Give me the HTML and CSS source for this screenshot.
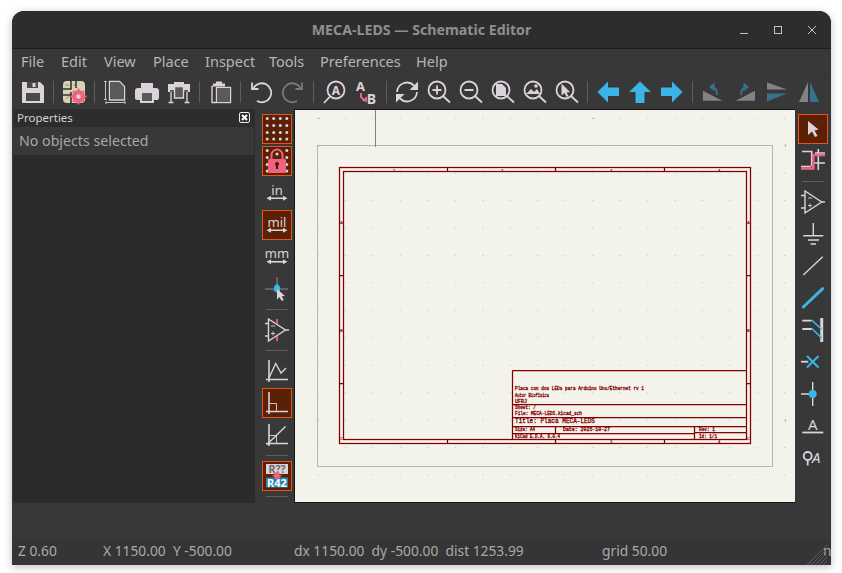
FILE: index.html
```html
<!DOCTYPE html>
<html lang="en">
<head>
<meta charset="utf-8">
<title>MECA-LEDS — Schematic Editor</title>
<link rel="stylesheet" href="styles.css">
</head>
<body>
<div class="window">
  <header class="titlebar">
    <span></span>
    <h1 class="title">MECA-LEDS — Schematic Editor</h1>
    <div class="winctl">
      <svg class="i16" viewBox="0 0 16 16"><path class="wc" d="M4 11.500h8"/></svg>
      <svg class="i16" viewBox="0 0 16 16"><rect class="wc" x="4.500" y="4.500" width="7" height="7"/></svg>
      <svg class="i16" viewBox="0 0 16 16"><path class="wc" d="M4 4l8 8M12 4l-8 8"/></svg>
    </div>
  </header>
  <nav class="menubar">
    <span>File</span><span>Edit</span><span>View</span><span>Place</span><span>Inspect</span><span>Tools</span><span>Preferences</span><span>Help</span>
  </nav>
  <div class="toolbar">
    <div class="tb"><svg class="ic" viewBox="0 0 24 24"><path class="f" d="M1 2h18l4 4v17H1z"/><rect class="dk" x="5" y="13" width="14" height="8"/><rect class="dk" x="6" y="2" width="11" height="6"/><rect class="f" x="11.500" y="3" width="3" height="4"/></svg></div>
    <i class="sep"></i>
    <div class="tb"><svg class="ic" viewBox="0 0 24 24"><rect x="1" y="1" width="22" height="22" rx="4" class="beige"/><path class="dline" d="M9 1v8H1M14 1v7M1 15h8v8M9 12v6"/><path class="dthin" d="M3 5h4M11 4l3 3M4 19l3-3"/><circle cx="16.500" cy="16.500" r="6.500" class="pf"/><path class="pst" d="M16.500 8.500v16M8.500 16.500h16M11 11l11 11M22 11L11 22"/><circle cx="16.500" cy="16.500" r="2.200" class="lf"/></svg></div>
    <i class="sep"></i>
    <div class="tb"><svg class="ic" viewBox="0 0 24 24"><path class="thin" d="M1 1.500h3M1 19.500h3M2.500 1.500v18M3 22.500h19M3 21v3M22 21v3"/><path class="st" d="M6.500 1.500h10l5 5v13.500h-15z"/><path class="fd" d="M7.500 2.500h8.500l4.500 4.500v12h-13z"/></svg></div>
    <div class="tb"><svg class="ic" viewBox="0 0 24 24"><path class="f" d="M6 3h12v6H6zM3 8h18a3 3 0 0 1 3 3v7a2 2 0 0 1-2 2h-3v-5H5v5H2a2 2 0 0 1-2-2v-7a3 3 0 0 1 3-3z"/><path class="f" d="M5 15h14v8H5z"/><path class="fd" d="M7 13h10v8H7z"/><path class="f" d="M14 23v-2h3z"/></svg></div>
    <div class="tb"><svg class="ic" viewBox="0 0 24 24"><path class="f" d="M1 4h22v8H1z"/><path class="fd" d="M3 10h18v2H3z"/><path class="st" d="M4 12v10M20 12v10M1.500 22.500h5M17.500 22.500h5"/><path class="st fd" d="M7.500 6.500h9V18h-9z"/><path class="f" d="M7 2h10v3H7z"/></svg></div>
    <i class="sep"></i>
    <div class="tb"><svg class="ic" viewBox="0 0 24 24"><path class="f" d="M8 1.500h6v2h3v3H5v-3h3z"/><path class="st" d="M5 6.500H4v16h4"/><rect class="st fd" x="8.500" y="7.500" width="14" height="15"/><path class="fd" d="M9 8h13v14H9z"/></svg></div>
    <i class="sep"></i>
    <div class="tb"><svg class="ic" viewBox="0 0 24 24"><path class="st2" d="M4.500 8A9.500 9.500 0 1 1 8 21"/><path class="st2" d="M3 2.500V9h6.500"/></svg></div>
    <div class="tb"><svg class="ic" viewBox="0 0 24 24"><path class="st2g" d="M19.500 8A9.500 9.500 0 1 0 16 21"/><path class="st2g" d="M21 2.500V9h-6.500"/></svg></div>
    <i class="sep"></i>
    <div class="tb"><svg class="ic" viewBox="0 0 24 24"><circle class="st2" cx="14" cy="10" r="8.500"/><path class="st2" d="M8 16.500L2 23"/><text class="glyphb" x="14" y="14.500" font-size="12">A</text></svg></div>
    <div class="tb"><svg class="ic" viewBox="0 0 24 24"><text class="glyphb" x="6.500" y="11" font-size="13">A</text><text class="glyphb" x="17.500" y="24" font-size="14">B</text><path class="pst2" d="M7 13v4l3 3"/><path class="pf" d="M8 21l5-5 0 6z"/></svg></div>
    <i class="sep"></i>
    <div class="tb"><svg class="ic" viewBox="0 0 24 24"><path class="st2" d="M2 12a10 10 0 0 1 17-6.500M22 12a10 10 0 0 1-17 6.500"/><path class="f" d="M23 1.500v8.500h-8.500zM1 22.500V14h8.500z"/></svg></div>
    <div class="tb"><svg class="ic" viewBox="0 0 24 24"><circle class="st2" cx="10" cy="10" r="8.500"/><path class="st2" d="M16 16l7 6.500M5.500 10h9M10 5.500v9"/></svg></div>
    <div class="tb"><svg class="ic" viewBox="0 0 24 24"><circle class="st2" cx="10" cy="10" r="8.500"/><path class="st2" d="M16 16l7 6.500M5.500 10h9"/></svg></div>
    <div class="tb"><svg class="ic" viewBox="0 0 24 24"><circle class="st2" cx="10" cy="10" r="8.500"/><path class="st2" d="M16 16l7 6.500"/><path class="f" d="M5 4h6l4 4v8H5z"/></svg></div>
    <div class="tb"><svg class="ic" viewBox="0 0 24 24"><circle class="st2" cx="10" cy="10" r="8.500"/><path class="st2" d="M16 16l7 6.500"/><path class="f" d="M3 14l5-5 3 3 3-3 3 5z"/><circle class="lf" cx="13" cy="6" r="1.800"/></svg></div>
    <div class="tb"><svg class="ic" viewBox="0 0 24 24"><circle class="st2" cx="10" cy="10" r="8.500"/><path class="st2" d="M16 16l7 6.500"/><path class="f" d="M6.500 3.500v12l3-2.500 2 4 2-1-2-3.500 3.500-.5z"/></svg></div>
    <i class="sep"></i>
    <div class="tb"><svg class="ic" viewBox="0 0 24 24"><path class="bf" d="M1.500 12L12 1.500V7.500H23V16H12V22.500z"/></svg></div>
    <div class="tb"><svg class="ic" viewBox="0 0 24 24"><path class="bf" d="M12 1.500L23 12H16.500V23H7.500V12H1z"/></svg></div>
    <div class="tb"><svg class="ic" viewBox="0 0 24 24"><path class="bf" d="M22.500 12L12 1.500V7.500H1V16H12V22.500z"/></svg></div>
    <i class="sep"></i>
    <div class="tb"><svg class="ic" viewBox="0 0 24 24"><path class="gf" d="M2 20.700V10.700l19.300 10z"/><path class="bds" d="M16 15C16 9.500 13.500 7 10 7"/><path class="bdf" d="M13.500 2.500L8 7l5.500 4.500z"/></svg></div>
    <div class="tb"><svg class="ic" viewBox="0 0 24 24"><path class="gf" d="M22 20.700V10.700L2.700 20.700z"/><path class="bds" d="M8 15C8 9.500 10.500 7 14 7"/><path class="bdf" d="M10.500 2.500L16 7l-5.500 4.500z"/></svg></div>
    <div class="tb"><svg class="ic" viewBox="0 0 24 24"><path class="gf" d="M2 2.500l20 7H2z"/><path class="bdf" d="M2 13.500h20l-20 8z"/></svg></div>
    <div class="tb"><svg class="ic" viewBox="0 0 24 24"><path class="gf" d="M2 22l9-20v20z"/><path class="bdf" d="M13 2l9 20h-9z"/></svg></div>
  </div>
  <main class="content">
    <aside class="panel">
      <div class="panel-head">
        <span>Properties</span>
        <svg class="closebox" viewBox="0 0 11 11"><rect class="cb" x=".5" y=".5" width="10" height="10" rx="1.500"/><path class="cx" d="M3 3l5 5M8 3l-5 5"/></svg>
      </div>
      <div class="panel-row">No objects selected</div>
    </aside>
    <div class="vtools left">
      <div class="vb on"><svg class="ic" viewBox="0 0 24 24"><g class="dots"><circle cx="2.200" cy="1.500"/><circle cx="8.700" cy="1.500"/><circle cx="15.300" cy="1.500"/><circle cx="21.800" cy="1.500"/><circle cx="2.200" cy="8.500"/><circle cx="8.700" cy="8.500"/><circle cx="15.300" cy="8.500"/><circle cx="21.800" cy="8.500"/><circle cx="2.200" cy="15.500"/><circle cx="8.700" cy="15.500"/><circle cx="15.300" cy="15.500"/><circle cx="21.800" cy="15.500"/><circle cx="2.200" cy="22"/><circle cx="8.700" cy="22"/><circle cx="15.300" cy="22"/><circle cx="21.800" cy="22"/></g></svg></div>
      <div class="vb on"><svg class="ic" viewBox="0 0 24 24"><g class="dots"><circle cx="2.200" cy="1.500"/><circle cx="21.800" cy="1.500"/><circle cx="2.200" cy="8.500"/><circle cx="21.800" cy="8.500"/><circle cx="2.200" cy="15.500"/><circle cx="21.800" cy="15.500"/><circle cx="2.200" cy="22"/><circle cx="21.800" cy="22"/><circle cx="12" cy="5"/></g><path class="pst3" d="M6.500 11V6a5.500 5.500 0 0 1 11 0v5"/><rect class="pf" x="3" y="10" width="18" height="14" rx="1.500"/><circle cx="12" cy="15" r="2" class="keyh"/><path class="keyh" d="M11 15h2v5h-2z"/></svg></div>
      <div class="vb"><svg class="ic" viewBox="0 0 24 24"><text class="unit" x="12" y="14">in</text><path class="arrow" d="M4 17.300h16"/><path class="f" d="M1.500 17.300L6 14.800v5zM22.500 17.300L18 14.800v5z"/></svg></div>
      <div class="vb on"><svg class="ic" viewBox="0 0 24 24"><text class="unit" x="12" y="13.700">mil</text><path class="arrow" d="M4 17.300h16"/><path class="f" d="M1.500 17.300L6 14.800v5zM22.500 17.300L18 14.800v5z"/></svg></div>
      <div class="vb"><svg class="ic" viewBox="0 0 24 24"><text class="unit" x="12" y="13">mm</text><path class="arrow" d="M4 16.800h16"/><path class="f" d="M1.500 16.800L6 14.300v5zM22.500 16.800L18 14.300v5z"/></svg></div>
      <div class="vb"><svg class="ic" viewBox="0 0 24 24"><path class="g1" d="M0 12h23M12 0v16"/><path class="bf" d="M12 6.500l3 3v5h-6v-5z"/><path class="f" d="M12 12v10.500l2.500-2.500 2.200 4 2-1-2-3.800 3.300-.2z"/></svg></div>
      <i class="hsep"></i>
      <div class="vb"><svg class="ic" viewBox="0 0 24 24"><path class="st" d="M3.500 1v22L20.500 12zM0 5.500h3.500M0 18h3.500M20.500 12H24"/><path class="thin" d="M6 8h4M6 15.500h4M8 13.500v4"/><path class="pst" d="M12 1v5M12 18v5"/></svg></div>
      <i class="hsep"></i>
      <div class="vb"><svg class="ic" viewBox="0 0 24 24"><path class="st15" d="M4 1v22M1 20.500h22"/><path class="st" d="M4 19L10.700 4.500 16 14l5-5"/></svg></div>
      <div class="vb on"><svg class="ic" viewBox="0 0 24 24"><path class="st15" d="M4 1v22M1 20.500h22"/><path class="thin" d="M4 12.500h7.500v8"/></svg></div>
      <div class="vb"><svg class="ic" viewBox="0 0 24 24"><path class="st15" d="M4 1v22M1 20.500h22"/><path class="thin" d="M4 12.500h7.500v8"/><path class="st" d="M2 21.500L20.500 3.500"/></svg></div>
      <i class="hsep"></i>
      <div class="vb on"><svg class="ic" viewBox="0 0 24 24"><rect class="lf" x="1" y="0" width="22" height="10"/><text class="r1" x="12" y="9">R??</text><rect class="bx" x="1" y="13.500" width="22" height="10"/><text class="r2" x="12" y="22.700">R42</text><path class="pf" d="M9.500 8.500h5v2.500h2.500L12 16l-5-5h2.500z"/></svg></div>
      <i class="hsep"></i>
    </div>
    <div class="canvas">
      <svg class="sheet" viewBox="295 110 500 392">
        <defs>
          <pattern id="grid" patternUnits="userSpaceOnUse" x="317.300" y="117.700" width="27.450" height="27.450"><rect width="1.500" height="1" fill="#cfcfca"/></pattern>
        </defs>
        <rect x="295" y="110" width="500" height="392" fill="url(#grid)"/>
        <rect class="page" x="317.500" y="145.500" width="455" height="321"/>
        <path class="mark" d="M317 118.500h3M317 146h3M316.500 420.500h1.500v-2M592 118.500h3M592 145.500h3M785.500 144v3M785.500 419v3"/>
        <path class="origin" d="M375.500 110v37"/>
        <rect class="frame" x="339.500" y="167.500" width="411" height="276"/>
        <rect class="frame" x="343.500" y="171.500" width="403" height="268"/>
        <path class="frame" d="M447.500 168v4M555.500 168v4M664.500 168v4M447.500 439v5M555.500 439v5M664.500 439v5M340 275.500h4M340 383.500h4M746 275.500h5M746 383.500h5"/>
        <g class="tick"><text x="393" y="172">1</text><text x="501" y="172">2</text><text x="610" y="172">3</text><text x="718" y="172">4</text><text x="610" y="443">3</text><text x="718" y="443">4</text><text x="340" y="224">A</text><text x="340" y="332">B</text><text x="340" y="440">C</text><text x="747" y="224">A</text><text x="747" y="332">B</text><text x="747" y="440">C</text></g>
        <path class="frame" d="M512.500 370.500h234M512.500 370.500v69M512.500 404.500h234M512.500 417.500h234M512.500 426.500h234M512.500 433.500h182M694.500 432.500h52M555.500 426.500v7M694.500 426.500v13"/>
        <g class="tb-text">
          <text x="515" y="390" textLength="129" lengthAdjust="spacingAndGlyphs">Placa con dos LEDs para Arduino Uno/Ethernet rv 1</text>
          <text x="515" y="396.700" textLength="34" lengthAdjust="spacingAndGlyphs">Autor Biofísica</text>
          <text x="515" y="402.700" textLength="12" lengthAdjust="spacingAndGlyphs">UFRJ</text>
          <text x="515" y="409.300" textLength="21" lengthAdjust="spacingAndGlyphs">Sheet: /</text>
          <text x="515" y="415" textLength="67" lengthAdjust="spacingAndGlyphs">File: MECA-LEDS.kicad_sch</text>
          <text class="big" x="515" y="423.300" textLength="80" lengthAdjust="spacingAndGlyphs">Title: Placa MECA-LEDS</text>
          <text x="515" y="431" textLength="20" lengthAdjust="spacingAndGlyphs">Size: A4</text>
          <text x="563" y="431" textLength="47" lengthAdjust="spacingAndGlyphs">Date: 2025-10-27</text>
          <text x="699" y="431" textLength="16" lengthAdjust="spacingAndGlyphs">Rev: 1</text>
          <text x="515" y="437.700" textLength="45" lengthAdjust="spacingAndGlyphs">KiCad E.D.A. 9.0.4</text>
          <text x="699" y="437.700" textLength="18" lengthAdjust="spacingAndGlyphs">Id: 1/1</text>
        </g>
      </svg>
    </div>
    <div class="vtools right">
      <div class="vb on"><svg class="ic" viewBox="0 0 24 24"><path class="f" d="M7 4v14l4-3.500 3 5.500 2.500-1-3-5.500 4-1z"/></svg></div>
      <div class="vb"><svg class="ic" viewBox="0 0 24 24"><path class="st15" d="M1 2.500h9.700V17M17.300 0v21M12.300 14H24"/><path class="st15" d="M0 17.500h10M14 4h10"/><path class="pst4" d="M0 19.500h12.300V6H24"/></svg></div>
      <i class="hsep"></i>
      <div class="vb"><svg class="ic" viewBox="0 0 24 24"><path class="st" d="M4 1v22l16.700-11zM0 5.500h4M0 18h4M20.700 12H24"/><path class="thin" d="M7 8h4M7 15.500h4M9 13.500v4"/></svg></div>
      <div class="vb"><svg class="ic" viewBox="0 0 24 24"><path class="st" d="M12.300 1v13M2.300 13.800h20M7 18h11M9.500 22h5.500"/></svg></div>
      <div class="vb"><svg class="ic" viewBox="0 0 24 24"><path class="st" d="M2.300 21L21.700 2.700"/></svg></div>
      <div class="vb"><svg class="ic" viewBox="0 0 24 24"><path class="bs3" d="M2.300 21L21.700 2.700"/></svg></div>
      <div class="vb"><svg class="ic" viewBox="0 0 24 24"><path class="st2" d="M1.300 2.700h9.400M1.300 11h9.400"/><path class="st3" d="M20.700 0v24"/><path class="bs" d="M10.700 2l10 9.300M10.700 10.300l10 10"/></svg></div>
      <div class="vb"><svg class="ic" viewBox="0 0 24 24"><path class="st2" d="M0 11.700h7.300"/><path class="bs2" d="M6 6l11.500 11.500M17.500 6L6 17.500"/></svg></div>
      <div class="vb"><svg class="ic" viewBox="0 0 24 24"><path class="st" d="M11.700 0v24M0 12h11.700"/><circle class="bf" cx="11.700" cy="12" r="4"/></svg></div>
      <div class="vb"><svg class="ic" viewBox="0 0 24 24"><text class="glyph" x="11.700" y="16" font-size="15">A</text><path class="st2" d="M1.300 18.500h21"/></svg></div>
      <div class="vb"><svg class="ic" viewBox="0 0 24 24"><circle class="st2" cx="6.700" cy="10" r="4"/><path class="st2" d="M6.700 14v5.500"/><text class="glyphi" x="11" y="16.700">A</text></svg></div>
    </div>
  </main>
  <footer class="bottom">
    <div class="spacer"></div>
    <div class="status">
      <span class="s1">Z 0.60</span>
      <span class="s2">X 1150.00&nbsp; Y -500.00</span>
      <span class="s3">dx 1150.00&nbsp; dy -500.00&nbsp; dist 1253.99</span>
      <span class="s4">grid 50.00</span>
      <span class="s5">n</span>
      <svg class="grip" viewBox="0 0 20 20"><path class="gr" d="M0 20L20 0M4 20L20 4M8 20L20 8M12 20l8-8M16 20l4-4"/></svg>
    </div>
  </footer>
</div>
</body>
</html>
```

FILE: styles.css
```css
* { box-sizing: border-box; }
html, body { margin: 0; height: 100%; background: #fff; }
body { padding: 11px 11px 8px 12px; font-family: "Noto Sans", "Open Sans", sans-serif; overflow: hidden; }
.window {
  width: 819px; height: 554px; display: flex; flex-direction: column;
  background: #383838; border-radius: 12px 12px 0 0; overflow: hidden;
  box-shadow: 0 2px 8px rgba(0,0,0,.25);
}
.titlebar {
  height: 38px; flex: none; display: grid; grid-template-columns: 1fr auto 1fr; align-items: center;
  background: #2d2d2d; border-bottom: 1px solid #1c1c1c;
}
.title { margin: 0; font-size: 14.2px; font-weight: 700; color: #8f8f8f; }
.winctl { display: flex; justify-content: flex-end; gap: 18px; padding-right: 11px; }
.i16 { width: 16px; height: 16px; display: block; }
.wc { fill: none; stroke: #c4c4c4; stroke-width: 1; }
.menubar {
  height: 25px; flex: none; display: flex; align-items: center; padding-left: 9px;
  font-size: 14.5px; color: #b4b6b8; background: #383838; border-bottom: 1px solid #333;
}
.menubar span { flex: none; }
.menubar span:nth-child(1) { width: 40px; }
.menubar span:nth-child(2) { width: 43px; }
.menubar span:nth-child(3) { width: 49px; }
.menubar span:nth-child(4) { width: 52px; }
.menubar span:nth-child(5) { width: 64px; }
.menubar span:nth-child(6) { width: 51px; }
.menubar span:nth-child(7) { width: 96px; }
.toolbar { height: 35px; flex: none; display: flex; align-items: center; padding-left: 5px; background: #383838; }
.tb { width: 32px; height: 32px; display: flex; align-items: center; justify-content: center; flex: none; }
.sep { width: 1px; height: 22px; margin: 0 4px; background: #5e5e5e; flex: none; }
.ic { width: 24px; height: 24px; display: block; overflow: visible; }
.content { height: 394px; flex: none; display: flex; background: #383838; }
.panel { width: 242px; flex: none; margin-left: 1px; background: #2b2b2b; height: 394px; }
.panel-head { height: 18px; display: flex; align-items: center; justify-content: space-between; padding: 0 5px 2px 4px; font-size: 11.5px; color: #d4d4d4; background: #2d2d2d; }
.closebox { width: 11px; height: 11px; display: block; }
.cb { fill: #2d2d2d; stroke: #eee; }
.cx { stroke: #fff; stroke-width: 2; }
.panel-row { height: 28px; display: flex; align-items: center; padding: 0 0 1px 6px; font-size: 14.2px; color: #a3a9ae; background: #383838; margin-right: 1px; }
.vtools { flex: none; display: flex; flex-direction: column; padding-top: 4px; background: #383838; }
.vtools.left { width: 39px; padding-left: 6px; }
.vtools.right { width: 36px; padding-left: 2px; }
.vb { width: 32px; height: 32px; flex: none; display: flex; align-items: center; justify-content: center; }
.vb.on { border: 1px solid transparent; background: #5a2106 padding-box; box-shadow: inset 0 0 0 1px #e2561f; }
.hsep { display: block; flex: none; width: 22px; height: 1px; margin: 4px 5px; background: #5e5e5e; }
.canvas { width: 501px; height: 394px; flex: none; background: #f3f3ec; border-top: 1px solid #161616; border-left: 1px solid #161616; border-bottom: 1px solid #161616; }
.sheet { width: 500px; height: 392px; display: block; }
.page { fill: none; stroke: #b4b4b2; stroke-width: 1; }
.mark { fill: none; stroke: #bdbdb9; stroke-width: 1; }
.origin { stroke: #808080; stroke-width: 1; fill: none; }
.frame { fill: none; stroke: #840000; stroke-width: 1.25; }
.tick text { font: bold 4px "Liberation Sans", sans-serif; fill: #840000; }
.tb-text text { font: 5px "Liberation Mono", monospace; fill: #840000; stroke: #840000; stroke-width: .3; }
.tb-text .big { font-size: 7px; }
.bottom { flex: 1; display: flex; flex-direction: column; min-height: 0; }
.spacer { height: 36px; flex: none; background: #383838; }
.status { flex: 1; display: flex; align-items: center; position: relative; font-size: 13.8px; color: #a7abae; background: #353535; overflow: hidden; white-space: nowrap; padding: 0 0 3px 6px; }
.status span { display: block; flex: none; }
.s1 { width: 85px; }
.s2 { width: 191px; }
.s3 { width: 308px; }
.s4 { width: 221px; }
.grip { position: absolute; right: 4px; bottom: 0; width: 20px; height: 20px; }
.gr { stroke: #5a5a5a; stroke-width: 1; fill: none; }
.f { fill: #dcd3da; }
.lf { fill: #dcd3da; }
.dk { fill: #4a4a4a; }
.fd { fill: #5a5a5a; }
.st { fill: none; stroke: #dcd3da; stroke-width: 1.4; }
.st.fd { fill: #5a5a5a; }
.st15 { fill: none; stroke: #dcd3da; stroke-width: 1.6; }
.st2 { fill: none; stroke: #dcd3da; stroke-width: 1.8; }
.st3 { fill: none; stroke: #dcd3da; stroke-width: 3; }
.st2g { fill: none; stroke: #7a7a7a; stroke-width: 1.8; }
.thin { fill: none; stroke: #dcd3da; stroke-width: .9; }
.beige { fill: #d8d3b4; }
.dline { fill: none; stroke: #333; stroke-width: 1.6; }
.dthin { fill: none; stroke: #8f8c76; stroke-width: 1; }
.pf { fill: #f0637f; }
.pst { fill: none; stroke: #f0637f; stroke-width: 1.8; }
.pst2 { fill: none; stroke: #f0637f; stroke-width: 2; }
.pst3 { fill: none; stroke: #f0637f; stroke-width: 2; }
.pst4 { fill: none; stroke: #f0637f; stroke-width: 2.6; }
.bf { fill: #3cb4e8; }
.bx { fill: #2a84b8; }
.bs { fill: none; stroke: #3cb4e8; stroke-width: 1.6; }
.bs2 { fill: none; stroke: #3cb4e8; stroke-width: 2; }
.bs3 { fill: none; stroke: #3cb4e8; stroke-width: 3; stroke-linecap: round; }
.gf { fill: #838383; }
.bdf { fill: #37728c; }
.bds { fill: none; stroke: #37728c; stroke-width: 2; }
.g1 { fill: none; stroke: #8a8a8a; stroke-width: 1; }
.dots circle { r: 1.5px; fill: #dcd3da; }
.keyh { fill: #4a1a08; }
.arrow { stroke: #dcd3da; stroke-width: 1.6; fill: none; }
.unit { font: 13px "Noto Sans", sans-serif; fill: #dcd3da; text-anchor: middle; }
.glyph { font-family: "Noto Sans", sans-serif; fill: #dcd3da; text-anchor: middle; }
.glyphb { font-family: "Noto Sans", sans-serif; font-weight: 700; fill: #dcd3da; text-anchor: middle; }
.glyphi { font: italic 15px "Noto Sans", sans-serif; fill: #dcd3da; }
.r1 { font: bold 10.5px "Noto Sans", sans-serif; fill: #6a6a6a; text-anchor: middle; }
.r2 { font: bold 11px "Noto Sans", sans-serif; fill: #fff; text-anchor: middle; }
```
